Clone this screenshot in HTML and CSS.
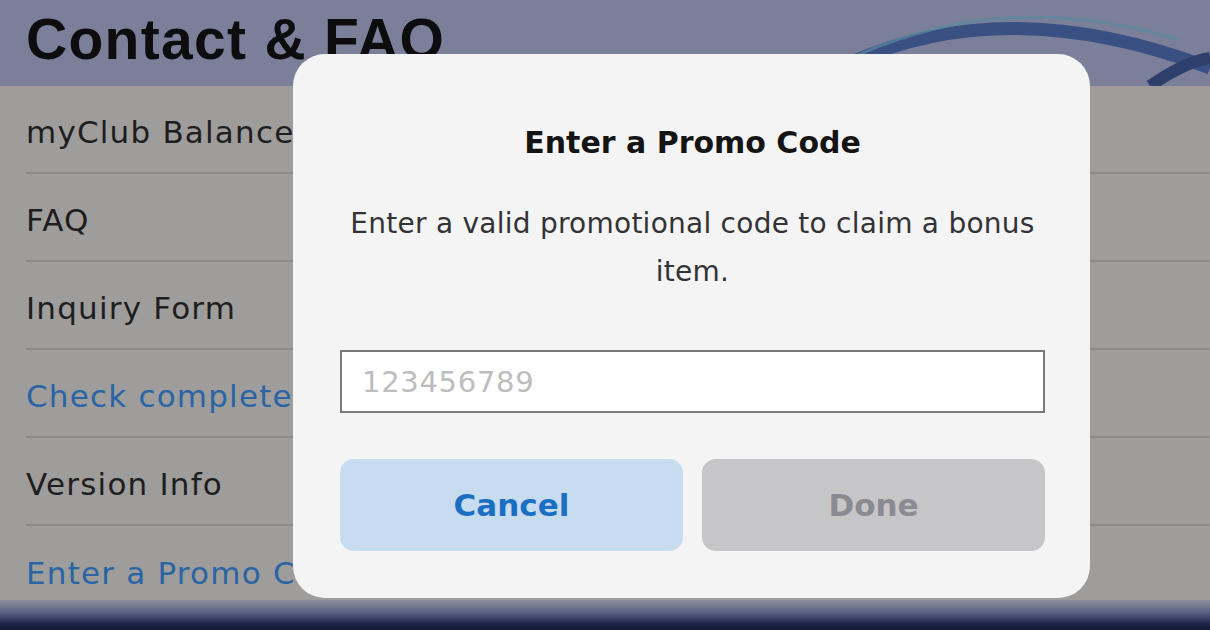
FILE: index.html
```html
<!DOCTYPE html>
<html>
<head>
<meta charset="utf-8">
<link rel="stylesheet" href="styles.css">
</head>
<body>
<div class="screen">
  <header class="header">
    <h1 class="title">Contact &amp; FAQ</h1>
    <svg class="arc" width="1210" height="86" viewBox="0 0 1210 86">
      <path d="M 852 62 Q 1010 -8 1210 68" fill="none" stroke="#3a4f82" stroke-width="13"/>
      <path d="M 858 55 Q 1010 -12 1180 40" fill="none" stroke="#5b8aa0" stroke-width="3" opacity="0.7"/>
      <path d="M 1150 86 Q 1185 62 1210 58" fill="none" stroke="#2f3f6c" stroke-width="12"/>
    </svg>
  </header>
  <main class="list">
    <div class="row"><span class="label">myClub Balance</span></div>
    <div class="row"><span class="label">FAQ</span></div>
    <div class="row"><span class="label">Inquiry Form</span></div>
    <div class="row link"><span class="label">Check completed inquiries</span></div>
    <div class="row"><span class="label">Version Info</span></div>
    <div class="row link last"><span class="label">Enter a Promo Code</span></div>
  </main>
  <footer class="bottom"></footer>

  <div class="modal">
    <h2 class="modal-title">Enter a Promo Code</h2>
    <p class="modal-text">Enter a valid promotional code to claim a bonus<br>item.</p>
    <div class="input"><span class="placeholder">123456789</span></div>
    <div class="buttons">
      <div class="btn cancel">Cancel</div>
      <div class="btn done">Done</div>
    </div>
  </div>
</div>
</body>
</html>
```
FILE: styles.css
```css
* { box-sizing: border-box; }
html, body { margin: 0; padding: 0; }
body {
  width: 1210px;
  height: 630px;
  overflow: hidden;
  font-family: "DejaVu Sans", "Liberation Sans", sans-serif;
  background: #9e9d9b;
}
.screen {
  position: relative;
  width: 1210px;
  height: 630px;
  display: flex;
  flex-direction: column;
}
.header {
  position: relative;
  height: 86px;
  flex: none;
  background: #7b7f99;
  padding-left: 26px;
  overflow: hidden;
}
.arc {
  position: absolute;
  left: 0;
  top: 0;
}
.title {
  position: relative;
  margin: 0;
  padding-top: 6px;
  font-family: "Liberation Sans", Arial, sans-serif;
  font-weight: 700;
  font-size: 57px;
  line-height: 66px;
  letter-spacing: 1.3px;
  color: #0d0d0f;
}
.list {
  flex: none;
  height: 514px;
  background: #9e9d9b;
  padding-left: 26px;
  overflow: hidden;
}
.row {
  height: 88px;
  border-bottom: 2px solid #8b8b8b;
  display: flex;
  align-items: center;
  padding-top: 5px;
  font-size: 31px;
  letter-spacing: 1.2px;
  color: #1e1e20;
  white-space: nowrap;
}
.label {
  display: block;
  max-width: 267px;
  overflow: hidden;
}
.row.link { color: #2a64a4; }
.row.last { border-bottom: none; }
.bottom {
  flex: 1;
  background: linear-gradient(#8e8f99 0%, #5d6488 40%, #1c2345 80%, #151b38 100%);
}
.modal {
  position: absolute;
  left: 293px;
  top: 54px;
  width: 797px;
  height: 544px;
  border-radius: 32px;
  background: #f4f4f4;
  padding: 69px 45px 47px 47px;
  display: flex;
  flex-direction: column;
  align-items: stretch;
}
.modal-title {
  margin: 0;
  text-align: center;
  font-size: 30px;
  line-height: 40px;
  font-weight: 700;
  color: #141414;
}
.modal-text {
  margin: 37px 0 0 0;
  text-align: center;
  font-size: 28px;
  line-height: 48px;
  letter-spacing: 0.25px;
  color: #333336;
}
.input {
  margin-top: 54px;
  height: 63px;
  background: #ffffff;
  border: 2px solid #7a7a7a;
  display: flex;
  align-items: center;
  padding-left: 20px;
}
.placeholder {
  font-size: 29px;
  letter-spacing: 0.7px;
  color: #bdbdbd;
}
.buttons {
  margin-top: 46px;
  display: flex;
  gap: 19px;
}
.btn {
  flex: 1;
  height: 92px;
  border-radius: 14px;
  display: flex;
  align-items: center;
  justify-content: center;
  font-size: 31px;
  font-weight: 700;
}
.cancel {
  background: #c8dcf0;
  color: #1b6fc2;
}
.done {
  background: #c6c6c9;
  color: #8a8a90;
}
```
